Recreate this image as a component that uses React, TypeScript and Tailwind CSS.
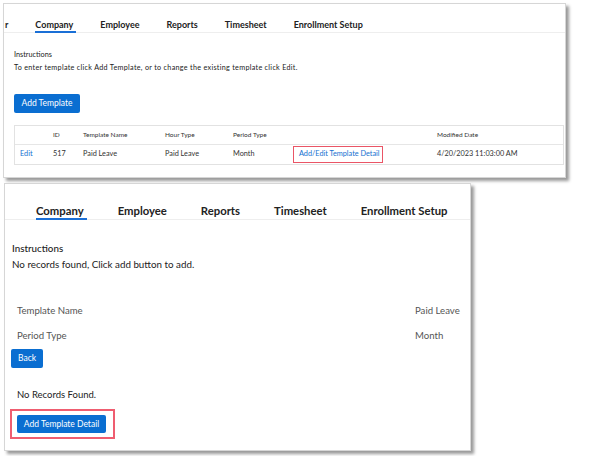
import React from "react";

const font = { fontFamily: "Lato, 'Open Sans', Arial, sans-serif" };

function Tabs({ size }: { size: "sm" | "lg" }) {
  const tabs = ["Company", "Employee", "Reports", "Timesheet", "Enrollment Setup"];
  const isSm = size === "sm";
  return (
    <div
      className={`flex items-end border-b border-[#eeeeee] ${
        isSm ? "h-[29px] pl-[1px] gap-[27px]" : "h-[36px] pl-[31px] gap-[34px]"
      }`}
    >
      {isSm && (
        <div className="-mb-px">
          <div className="text-[9px] leading-[12px] font-bold text-[#222]">r</div>
          <div className="h-[2px]" />
        </div>
      )}
      {tabs.map((tab, i) => (
        <div key={tab} className="-mb-px">
          <div
            className={`font-bold text-[#222] ${
              isSm ? "text-[9px] leading-[12px]" : "text-[11.3px] leading-[14px]"
            }`}
          >
            {tab}
          </div>
          <div className={`h-[2px] ${i === 0 ? "bg-[#1a6fd6] mr-[-3px]" : ""}`} />
        </div>
      ))}
    </div>
  );
}

function TemplateListPanel() {
  const cols = "grid grid-cols-[33px_30px_82px_68px_60px_144px_1fr] pl-[5px] h-[19px] items-center";
  return (
    <div className="ml-[3px] mt-[3px] w-[563px] h-[175px] border border-[#d6d6d6] bg-white shadow-[3px_3px_3px_rgba(0,0,0,0.4)]">
      <Tabs size="sm" />
      <div className="pl-[10px] pr-[1px]">
        <div className="mt-[17px] text-[7.3px] leading-[10px] text-[#222]">Instructions</div>
        <div className="mt-[3px] text-[7.2px] leading-[10px] tracking-[0.3px] text-[#222]">
          To enter template click Add Template, or to change the existing template click Edit.
        </div>
        <button className="mt-[21px] w-[66px] h-[19px] rounded-[2px] bg-[#0a6ed1] text-white text-[8.5px] flex items-center justify-center">
          Add Template
        </button>
        <div className="mt-[12px] border border-[#e2e2e2]">
          <div className={`${cols} border-b border-[#e6e6e6] text-[6.5px] text-[#333]`}>
            <div />
            <div>ID</div>
            <div>Template Name</div>
            <div>Hour Type</div>
            <div>Period Type</div>
            <div />
            <div>Modified Date</div>
          </div>
          <div className={`${cols} text-[7.3px] text-[#333]`}>
            <div className="text-[#1570d0]">Edit</div>
            <div>517</div>
            <div>Paid Leave</div>
            <div>Paid Leave</div>
            <div>Month</div>
            <div>
              <div className="w-[90px] h-[17px] border-[1.5px] border-[#ea5566] flex items-center pl-[5px] text-[#1570d0]">
                Add/Edit Template Detail
              </div>
            </div>
            <div>4/20/2023 11:03:00 AM</div>
          </div>
        </div>
      </div>
    </div>
  );
}

function TemplateDetailPanel() {
  return (
    <div className="ml-[4px] mt-[5px] w-[467px] h-[268px] border border-[#d6d6d6] bg-white shadow-[3px_3px_3px_rgba(0,0,0,0.4)]">
      <Tabs size="lg" />
      <div className="pl-[7px] text-[9.8px] leading-[12px] text-[#222]">
        <div className="mt-[22px] font-medium">Instructions</div>
        <div className="mt-[4px]">No records found, Click add button to add.</div>
      </div>
      <div className="pl-[12px] text-[9.6px] leading-[12px] text-[#555]">
        <div className="mt-[35px] flex">
          <div className="w-[398px]">Template Name</div>
          <div>Paid Leave</div>
        </div>
        <div className="mt-[13px] flex">
          <div className="w-[398px]">Period Type</div>
          <div>Month</div>
        </div>
      </div>
      <button className="ml-[6px] mt-[7px] w-[32px] h-[19px] rounded-[2px] bg-[#0a6ed1] text-white text-[8.5px] flex items-center justify-center">
        Back
      </button>
      <div className="ml-[12px] mt-[21px] text-[9.5px] leading-[12px] text-[#222]">No Records Found.</div>
      <div className="ml-[5px] mt-[8px] w-[105px] h-[30px] border-2 border-[#ef5d70] pl-[5px] pt-[4px]">
        <button className="w-[89px] h-[18px] rounded-[2px] bg-[#0a6ed1] text-white text-[8.5px] flex items-center justify-center">
          Add Template Detail
        </button>
      </div>
    </div>
  );
}

export default function App() {
  return (
    <div className="w-[592px] h-[456px] bg-white overflow-hidden flex flex-col" style={font}>
      <TemplateListPanel />
      <TemplateDetailPanel />
    </div>
  );
}
